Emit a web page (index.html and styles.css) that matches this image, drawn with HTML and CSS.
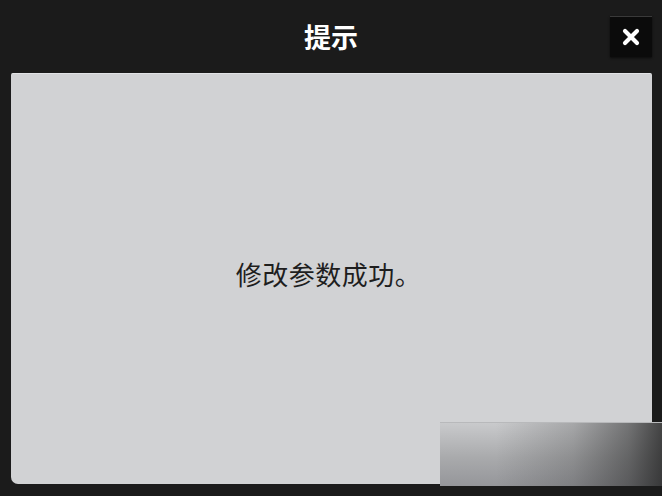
FILE: index.html
```html
<!DOCTYPE html>
<html lang="zh-CN">
<head>
<meta charset="utf-8">
<title>提示</title>
<link rel="stylesheet" href="styles.css">
</head>
<body>
<div class="dialog">
  <div class="header">
    <span class="spacer"></span>
    <h1 class="title">提示</h1>
    <button class="close" aria-label="关闭">
      <svg width="18" height="18" viewBox="0 0 18 18">
        <path d="M3 3 L15 15 M15 3 L3 15" stroke="#fff" stroke-width="4.2" stroke-linecap="round"/>
      </svg>
    </button>
  </div>
  <div class="panel">
    <p class="message">修改参数成功。</p>
  </div>
  <div class="shade"></div>
</div>
</body>
</html>
```

FILE: styles.css
```css
html, body {
  margin: 0;
  padding: 0;
  background: #1b1b1b;
}
.dialog {
  width: 662px;
  height: 496px;
  display: flex;
  flex-direction: column;
  position: relative;
  overflow: hidden;
  font-family: "Noto Sans CJK SC", "Noto Sans", sans-serif;
}
.header {
  height: 73px;
  display: grid;
  grid-template-columns: 1fr auto 1fr;
  align-items: start;
}
.title {
  margin: 0;
  padding-top: 17px;
  font-size: 27px;
  line-height: 40px;
  font-weight: 700;
  color: #ffffff;
  letter-spacing: 0;
}
.close {
  justify-self: end;
  margin: 16px 10px 0 0;
  width: 42px;
  height: 41px;
  padding: 0;
  border: none;
  border-top: 1px solid #3a3a3a;
  background: #0b0b0b;
  display: flex;
  align-items: center;
  justify-content: center;
  box-shadow: 0 1px 2px rgba(0,0,0,0.6);
}
.panel {
  margin: 0 10px 0 11px;
  height: 411px;
  background: #d1d2d4;
  border-top: 1px solid #e2e3e5;
  border-radius: 2px 2px 2px 7px;
  display: flex;
  align-items: center;
  justify-content: center;
  box-sizing: border-box;
}
.message {
  margin: 0;
  padding: 0 6px 10px 0;
  font-size: 26px;
  line-height: 36px;
  font-weight: 400;
  color: #1e1e1e;
  letter-spacing: 0.5px;
}
.shade {
  position: absolute;
  left: 440px;
  top: 422px;
  width: 222px;
  height: 63px;
  background:
    linear-gradient(to right, rgba(30,30,30,0) 25%, rgba(30,30,30,0.2) 60%, rgba(30,30,30,0.5) 85%, rgba(30,30,30,0.78) 100%),
    linear-gradient(to bottom, #c9cacc, #a9aaac 55%, #95969a);
  border-top: 1px solid #b8b9bb;
}
```
